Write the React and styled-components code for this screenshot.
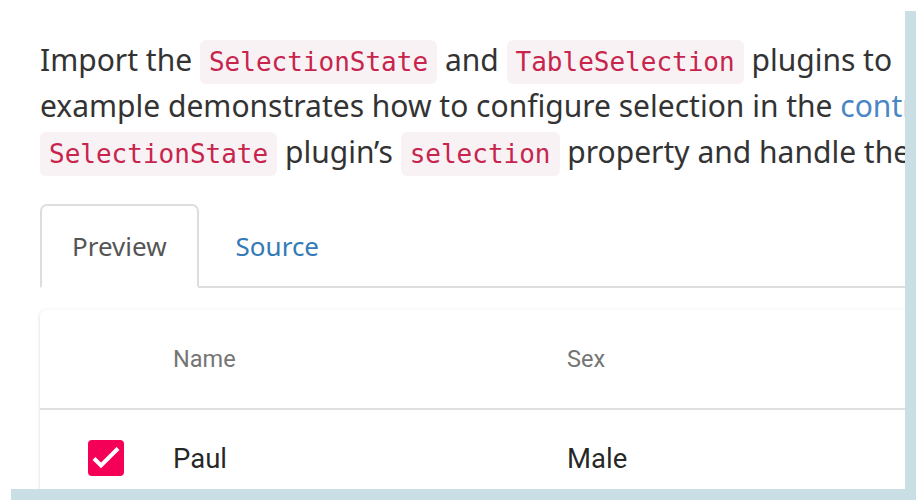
import React from 'react';
import styled, { createGlobalStyle } from 'styled-components';

const GlobalStyle = createGlobalStyle`
    html, body {
        margin: 0;
        padding: 0;
        background: #ffffff;
    }
`

const Page = styled.div`
    width: 916px;
    height: 500px;
    overflow: hidden;
`

const Frame = styled.div`
    width: 905px;
    height: 489px;
    overflow: hidden;
    background: #ffffff;
    box-shadow: 11px 11px 0 #c9dfe5;
    padding: 37px 0 0 40px;
    box-sizing: border-box;
`

const Text = styled.p`
    margin: 0;
    font-family: "Noto Sans", "Open Sans", sans-serif;
    font-size: 30px;
    line-height: 46px;
    color: #333333;
    white-space: nowrap;
`

const Code = styled.code`
    font-family: "DejaVu Sans Mono", "Liberation Mono", monospace;
    font-size: 26px;
    line-height: 1;
    color: #c7254e;
    background: #f9f2f4;
    border-radius: 6px;
    padding: 7px 9px;
`

const Link = styled.a`
    color: #4a86c5;
    text-decoration: none;
`

const TabBar = styled.div`
    display: flex;
    margin-top: 29px;
    border-bottom: 2px solid #dddddd;
    height: 82px;
`

const Tab = styled.div`
    display: flex;
    align-items: center;
    margin-bottom: -2px;
    font-family: "Noto Sans", "Open Sans", sans-serif;
    font-size: 26px;
    color: ${({active}) => active ? '#555555' : '#337ab7'};
    background: ${({active}) => active ? '#ffffff' : 'transparent'};
    border: 2px solid ${({active}) => active ? '#dddddd' : 'transparent'};
    border-bottom-color: ${({active}) => active ? '#ffffff' : 'transparent'};
    border-radius: 7px 7px 0 0;
    padding: 0 30px 0 30px;
    padding-left: ${({active}) => active ? '30px' : '35px'};
`

const Card = styled.div`
    margin-top: 22px;
    width: 1000px;
    background: #ffffff;
    border-radius: 6px;
    box-shadow: 0 1px 4px rgba(0,0,0,0.12), 0 1px 2px rgba(0,0,0,0.06);
    font-family: Roboto, sans-serif;
`

const Row = styled.div`
    display: grid;
    grid-template-columns: 133px 394px 1fr;
    align-items: center;
    height: ${({head}) => head ? '98px' : '96px'};
    border-bottom: ${({head}) => head ? '2px solid #e0e0e0' : 'none'};
`

const Cell = styled.div`
    font-size: ${({head}) => head ? '23.5px' : '27.5px'};
    color: ${({head}) => head ? '#757575' : 'rgba(0,0,0,0.87)'};
`

const CheckCell = styled.div`
    display: flex;
    padding-left: 48px;
`

const Check = styled.div`
    width: 36px;
    height: 36px;
    border-radius: 4px;
    background: #f50057;
    display: flex;
    align-items: center;
    justify-content: center;
`

export default function App() {
    return (
        <Page>
            <GlobalStyle />
            <Frame>
                <Text>
                    Import the <Code>SelectionState</Code> and <Code>TableSelection</Code> plugins to
                    <br />
                    example demonstrates how to configure selection in the <Link href="#">contr</Link>
                    <br />
                    <Code>SelectionState</Code> plugin’s <Code>selection</Code> property and handle the
                </Text>
                <TabBar>
                    <Tab active>Preview</Tab>
                    <Tab>Source</Tab>
                </TabBar>
                <Card>
                    <Row head>
                        <div />
                        <Cell head>Name</Cell>
                        <Cell head>Sex</Cell>
                    </Row>
                    <Row>
                        <CheckCell>
                            <Check>
                                <svg width="36" height="36" viewBox="0 0 36 36">
                                    <path d="M6 18.5l7 7L30 8.5" fill="none" stroke="#ffffff" strokeWidth="4" />
                                </svg>
                            </Check>
                        </CheckCell>
                        <Cell>Paul</Cell>
                        <Cell>Male</Cell>
                    </Row>
                </Card>
            </Frame>
        </Page>
    )
}
